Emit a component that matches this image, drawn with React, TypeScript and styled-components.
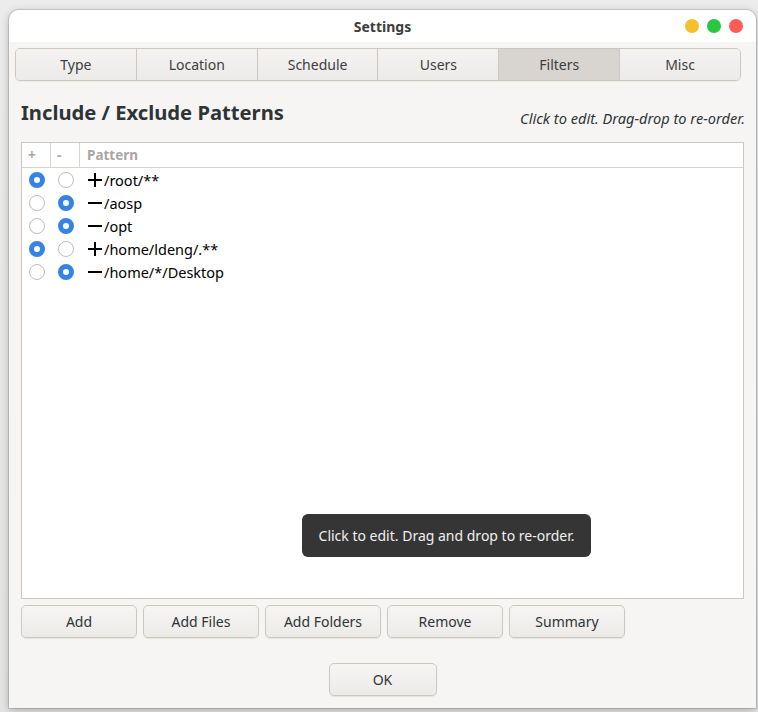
import React from "react";
import styled, { createGlobalStyle } from "styled-components";

const Global = createGlobalStyle`
  html, body { margin: 0; padding: 0; }
  body {
    background: linear-gradient(180deg, #ececec 0%, #e4e4e4 100%);
    font-family: "Noto Sans", "Open Sans", sans-serif;
    color: #3d3d3d;
    width: 758px;
    height: 712px;
    overflow: hidden;
  }
`;

const Desktop = styled.div`
  width: 758px;
  height: 712px;
  box-sizing: border-box;
  padding: 10px 2px 4px 9px;
  display: flex;
`;

const Window = styled.div`
  flex: 1;
  display: flex;
  flex-direction: column;
  background: #f6f5f4;
  border-radius: 10px 10px 0 0;
  box-shadow: 0 0 0 1px rgba(0, 0, 0, 0.12), 0 2px 8px rgba(0, 0, 0, 0.25);
  overflow: hidden;
  position: relative;
`;

const TitleBar = styled.div`
  height: 32px;
  flex: none;
  background: #ffffff;
  display: flex;
  align-items: center;
  justify-content: center;
  position: relative;
`;

const Title = styled.div`
  font-weight: 700;
  font-size: 14px;
  color: #3d3d3d;
`;

const Lights = styled.div`
  position: absolute;
  right: 13px;
  top: 9px;
  display: flex;
  gap: 8px;
`;

const Light = styled.span<{ $c: string }>`
  width: 14px;
  height: 14px;
  border-radius: 50%;
  background: ${(p) => p.$c};
`;

const Body = styled.div`
  flex: 1;
  display: flex;
  flex-direction: column;
  padding: 6px 12px 12px 12px;
  min-height: 0;
`;

const Tabs = styled.div`
  display: flex;
  margin: 0 3px 0 -6px;
  height: 33px;
  flex: none;
  border: 1px solid #cdc7c2;
  border-radius: 5px;
  overflow: hidden;
  box-sizing: border-box;
  box-shadow: 0 1px 1px rgba(0, 0, 0, 0.05);
`;

const Tab = styled.div<{ $active?: boolean }>`
  flex: 1;
  display: flex;
  align-items: center;
  justify-content: center;
  font-size: 14px;
  color: #3d3d3d;
  background: ${(p) =>
    p.$active ? "#d8d4d0" : "linear-gradient(180deg, #f4f3f2 0%, #edebe9 100%)"};
  & + & {
    border-left: 1px solid #cdc7c2;
  }
`;

const HeadRow = styled.div`
  display: flex;
  align-items: flex-start;
  justify-content: space-between;
  margin-top: 16px;
  height: 36px;
  flex: none;
`;

const Heading = styled.div`
  font-size: 20.2px;
  font-weight: 700;
  color: #2e3436;
  margin-top: 1px;
`;

const Hint = styled.div`
  font-size: 14.6px;
  font-style: italic;
  color: #2e3436;
  margin-top: 11px;
  margin-right: -1px;
`;

const Tree = styled.div`
  margin-top: 9px;
  flex: 1;
  background: #ffffff;
  border: 1px solid #cdc7c2;
  display: flex;
  flex-direction: column;
  min-height: 0;
`;

const Header = styled.div`
  display: grid;
  grid-template-columns: 29px 29px 1fr;
  height: 24px;
  border-bottom: 1px solid #d8d4d0;
  flex: none;
`;

const HeadCell = styled.div<{ $last?: boolean }>`
  display: flex;
  align-items: center;
  padding-left: ${(p) => (p.$last ? "7px" : "6px")};
  font-size: 13.5px;
  font-weight: 700;
  color: #a9a6a3;
  border-right: ${(p) => (p.$last ? "none" : "1px solid #d8d4d0")};
`;

const Row = styled.div`
  display: grid;
  grid-template-columns: 29px 29px 1fr;
  height: 23px;
  align-items: center;
`;

const RadioCell = styled.div`
  display: flex;
  justify-content: center;
`;

const Radio = styled.span<{ $on?: boolean }>`
  width: 16px;
  height: 16px;
  box-sizing: border-box;
  border-radius: 50%;
  background: #ffffff;
  border: ${(p) => (p.$on ? "5px solid #3584e4" : "1px solid #c0bcb8")};
`;

const Pattern = styled.div`
  display: flex;
  align-items: center;
  padding-left: 7px;
  font-size: 14.5px;
  color: #000000;
`;

const Sign = styled.span`
  display: inline-block;
  width: 16px;
  height: 16px;
  position: relative;
  margin-right: 1px;
`;

const Bar = styled.span<{ $v?: boolean }>`
  position: absolute;
  background: #000;
  ${(p) =>
    p.$v
      ? "left: 7px; top: 1px; width: 2px; height: 14px;"
      : "left: 1px; top: 7px; width: 14px; height: 2px;"}
`;

const Tooltip = styled.div`
  position: absolute;
  left: 293px;
  top: 504px;
  width: 289px;
  height: 43px;
  box-sizing: border-box;
  background: #353535;
  border-radius: 6px;
  color: #f0f0f0;
  font-size: 14px;
  display: flex;
  align-items: center;
  justify-content: center;
`;

const Buttons = styled.div`
  display: flex;
  gap: 6px;
  margin-top: 6px;
  flex: none;
`;

const Button = styled.div<{ $w?: number }>`
  width: ${(p) => p.$w ?? 116}px;
  height: 33px;
  box-sizing: border-box;
  border: 1px solid #cdc7c2;
  border-radius: 5px;
  background: linear-gradient(180deg, #f6f5f4 0%, #edebe9 100%);
  box-shadow: 0 1px 1px rgba(0, 0, 0, 0.07);
  display: flex;
  align-items: center;
  justify-content: center;
  font-size: 14px;
  color: #2e3436;
`;

const Footer = styled.div`
  display: flex;
  justify-content: center;
  margin-top: 25px;
  flex: none;
`;

const rows: { inc: boolean; text: string }[] = [
  { inc: true, text: "/root/**" },
  { inc: false, text: "/aosp" },
  { inc: false, text: "/opt" },
  { inc: true, text: "/home/ldeng/.**" },
  { inc: false, text: "/home/*/Desktop" },
];

export default function App() {
  return (
    <>
      <Global />
      <Desktop>
        <Window>
          <TitleBar>
            <Title>Settings</Title>
            <Lights>
              <Light $c="#f6c02c" />
              <Light $c="#29c640" />
              <Light $c="#fb5d55" />
            </Lights>
          </TitleBar>
          <Body>
            <Tabs>
              <Tab>Type</Tab>
              <Tab>Location</Tab>
              <Tab>Schedule</Tab>
              <Tab>Users</Tab>
              <Tab $active>Filters</Tab>
              <Tab>Misc</Tab>
            </Tabs>
            <HeadRow>
              <Heading>Include / Exclude Patterns</Heading>
              <Hint>Click to edit. Drag-drop to re-order.</Hint>
            </HeadRow>
            <Tree>
              <Header>
                <HeadCell>+</HeadCell>
                <HeadCell>-</HeadCell>
                <HeadCell $last>Pattern</HeadCell>
              </Header>
              {rows.map((r) => (
                <Row key={r.text}>
                  <RadioCell>
                    <Radio $on={r.inc} />
                  </RadioCell>
                  <RadioCell>
                    <Radio $on={!r.inc} />
                  </RadioCell>
                  <Pattern>
                    <Sign>
                      <Bar />
                      {r.inc && <Bar $v />}
                    </Sign>
                    {r.text}
                  </Pattern>
                </Row>
              ))}
            </Tree>
            <Buttons>
              <Button>Add</Button>
              <Button>Add Files</Button>
              <Button>Add Folders</Button>
              <Button>Remove</Button>
              <Button>Summary</Button>
            </Buttons>
            <Footer>
              <Button $w={108}>OK</Button>
            </Footer>
          </Body>
          <Tooltip>Click to edit. Drag and drop to re-order.</Tooltip>
        </Window>
      </Desktop>
    </>
  );
}
